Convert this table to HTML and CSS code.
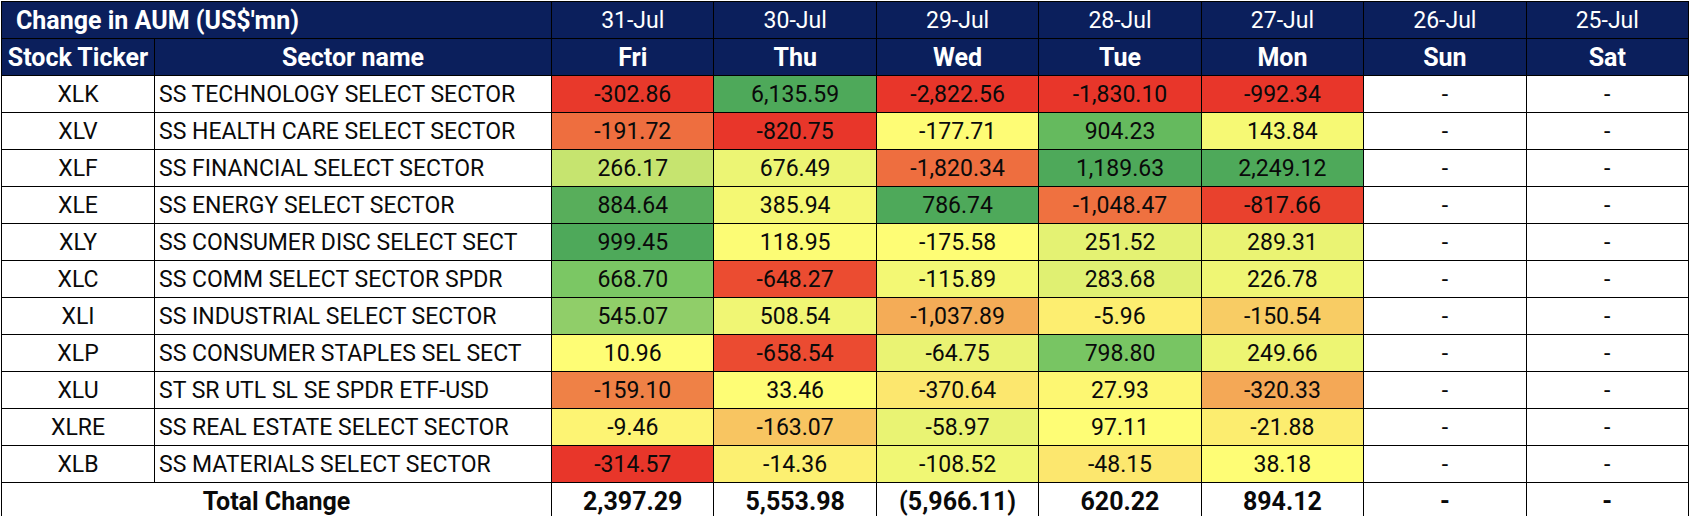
FILE: index.html
```html
<!DOCTYPE html>
<html lang="en">
<head>
<meta charset="utf-8">
<title>Change in AUM</title>
<link rel="stylesheet" href="styles.css">
</head>
<body>
<table class="aum">
  <colgroup>
    <col class="c-tick">
    <col class="c-sec">
    <col><col><col><col><col><col><col>
  </colgroup>
  <thead>
    <tr class="hdr">
      <th colspan="2" class="title">Change in AUM (US$'mn)</th>
      <th class="date">31-Jul</th>
      <th class="date">30-Jul</th>
      <th class="date">29-Jul</th>
      <th class="date">28-Jul</th>
      <th class="date">27-Jul</th>
      <th class="date">26-Jul</th>
      <th class="date">25-Jul</th>
    </tr>
    <tr class="hdr">
      <th>Stock Ticker</th>
      <th>Sector name</th>
      <th>Fri</th>
      <th>Thu</th>
      <th>Wed</th>
      <th>Tue</th>
      <th>Mon</th>
      <th>Sun</th>
      <th>Sat</th>
    </tr>
  </thead>
  <tbody>
    <tr>
      <td class="tick">XLK</td><td class="sec">SS TECHNOLOGY SELECT SECTOR</td>
      <td style="background:#E8392B">-302.86</td>
      <td style="background:#4EA95A">6,135.59</td>
      <td style="background:#E8362A">-2,822.56</td>
      <td style="background:#E8362A">-1,830.10</td>
      <td style="background:#E8362A">-992.34</td>
      <td>-</td><td>-</td>
    </tr>
    <tr>
      <td class="tick">XLV</td><td class="sec">SS HEALTH CARE SELECT SECTOR</td>
      <td style="background:#EE6E3F">-191.72</td>
      <td style="background:#E8362A">-820.75</td>
      <td style="background:#FEFC75">-177.71</td>
      <td style="background:#65BA5E">904.23</td>
      <td style="background:#F6F974">143.84</td>
      <td>-</td><td>-</td>
    </tr>
    <tr>
      <td class="tick">XLF</td><td class="sec">SS FINANCIAL SELECT SECTOR</td>
      <td style="background:#C6E46F">266.17</td>
      <td style="background:#ECF574">676.49</td>
      <td style="background:#EE6E3F">-1,820.34</td>
      <td style="background:#4EA95A">1,189.63</td>
      <td style="background:#4EA95A">2,249.12</td>
      <td>-</td><td>-</td>
    </tr>
    <tr>
      <td class="tick">XLE</td><td class="sec">SS ENERGY SELECT SECTOR</td>
      <td style="background:#58AE5B">884.64</td>
      <td style="background:#F4F873">385.94</td>
      <td style="background:#4EA95A">786.74</td>
      <td style="background:#EF7140">-1,048.47</td>
      <td style="background:#E9412D">-817.66</td>
      <td>-</td><td>-</td>
    </tr>
    <tr>
      <td class="tick">XLY</td><td class="sec">SS CONSUMER DISC SELECT SECT</td>
      <td style="background:#4EA95A">999.45</td>
      <td style="background:#FCFC75">118.95</td>
      <td style="background:#FEFD75">-175.58</td>
      <td style="background:#E4F273">251.52</td>
      <td style="background:#EAF373">289.31</td>
      <td>-</td><td>-</td>
    </tr>
    <tr>
      <td class="tick">XLC</td><td class="sec">SS COMM SELECT SECTOR SPDR</td>
      <td style="background:#7BC764">668.70</td>
      <td style="background:#EB4C31">-648.27</td>
      <td style="background:#F3F874">-115.89</td>
      <td style="background:#E0F072">283.68</td>
      <td style="background:#EFF674">226.78</td>
      <td>-</td><td>-</td>
    </tr>
    <tr>
      <td class="tick">XLI</td><td class="sec">SS INDUSTRIAL SELECT SECTOR</td>
      <td style="background:#90CE69">545.07</td>
      <td style="background:#F0F674">508.54</td>
      <td style="background:#F4AC57">-1,037.89</td>
      <td style="background:#FDEE70">-5.96</td>
      <td style="background:#F8CC64">-150.54</td>
      <td>-</td><td>-</td>
    </tr>
    <tr>
      <td class="tick">XLP</td><td class="sec">SS CONSUMER STAPLES SEL SECT</td>
      <td style="background:#FEFD75">10.96</td>
      <td style="background:#EB4B31">-658.54</td>
      <td style="background:#EAF373">-64.75</td>
      <td style="background:#78C563">798.80</td>
      <td style="background:#EDF573">249.66</td>
      <td>-</td><td>-</td>
    </tr>
    <tr>
      <td class="tick">XLU</td><td class="sec">ST SR UTL SL SE SPDR ETF-USD</td>
      <td style="background:#EF8146">-159.10</td>
      <td style="background:#FEFD75">33.46</td>
      <td style="background:#FCE76E">-370.64</td>
      <td style="background:#FDF772">27.93</td>
      <td style="background:#F4A856">-320.33</td>
      <td>-</td><td>-</td>
    </tr>
    <tr>
      <td class="tick">XLRE</td><td class="sec">SS REAL ESTATE SELECT SECTOR</td>
      <td style="background:#FDF473">-9.46</td>
      <td style="background:#F8C561">-163.07</td>
      <td style="background:#E9F373">-58.97</td>
      <td style="background:#FEFD75">97.11</td>
      <td style="background:#FCED6F">-21.88</td>
      <td>-</td><td>-</td>
    </tr>
    <tr>
      <td class="tick">XLB</td><td class="sec">SS MATERIALS SELECT SECTOR</td>
      <td style="background:#E8362A">-314.57</td>
      <td style="background:#FCF071">-14.36</td>
      <td style="background:#F0F774">-108.52</td>
      <td style="background:#FCE76E">-48.15</td>
      <td style="background:#FEFD75">38.18</td>
      <td>-</td><td>-</td>
    </tr>
    <tr class="total">
      <td colspan="2">Total Change</td>
      <td>2,397.29</td>
      <td>5,553.98</td>
      <td>(5,966.11)</td>
      <td>620.22</td>
      <td>894.12</td>
      <td>-</td>
      <td>-</td>
    </tr>
  </tbody>
</table>
</body>
</html>
```

FILE: styles.css
```css
html, body {
  margin: 0;
  padding: 0;
  background: #ffffff;
}

body {
  padding: 1px 0 0 1px;
  font-family: Roboto, "Liberation Sans", sans-serif;
  font-size: 23px;
  color: #0a0a0a;
}

.aum {
  border-collapse: collapse;
  table-layout: fixed;
  width: 1688px;
}

.c-tick { width: 153px; }
.c-sec { width: 397px; }

.aum th,
.aum td {
  border: 1px solid #000000;
  height: 36px;
  padding: 0;
  text-align: center;
  vertical-align: middle;
  white-space: nowrap;
  overflow: hidden;
  line-height: 1;
}

.hdr th {
  background: #0b1f5c;
  color: #ffffff;
  font-weight: 700;
  font-size: 25px;
}

.hdr th.date {
  font-weight: 400;
  font-size: 23px;
}

.hdr th.title {
  text-align: left;
  padding-left: 14px;
}

.aum td.sec {
  text-align: left;
  padding-left: 4px;
}

.total td {
  font-weight: 700;
  font-size: 25px;
}
```
